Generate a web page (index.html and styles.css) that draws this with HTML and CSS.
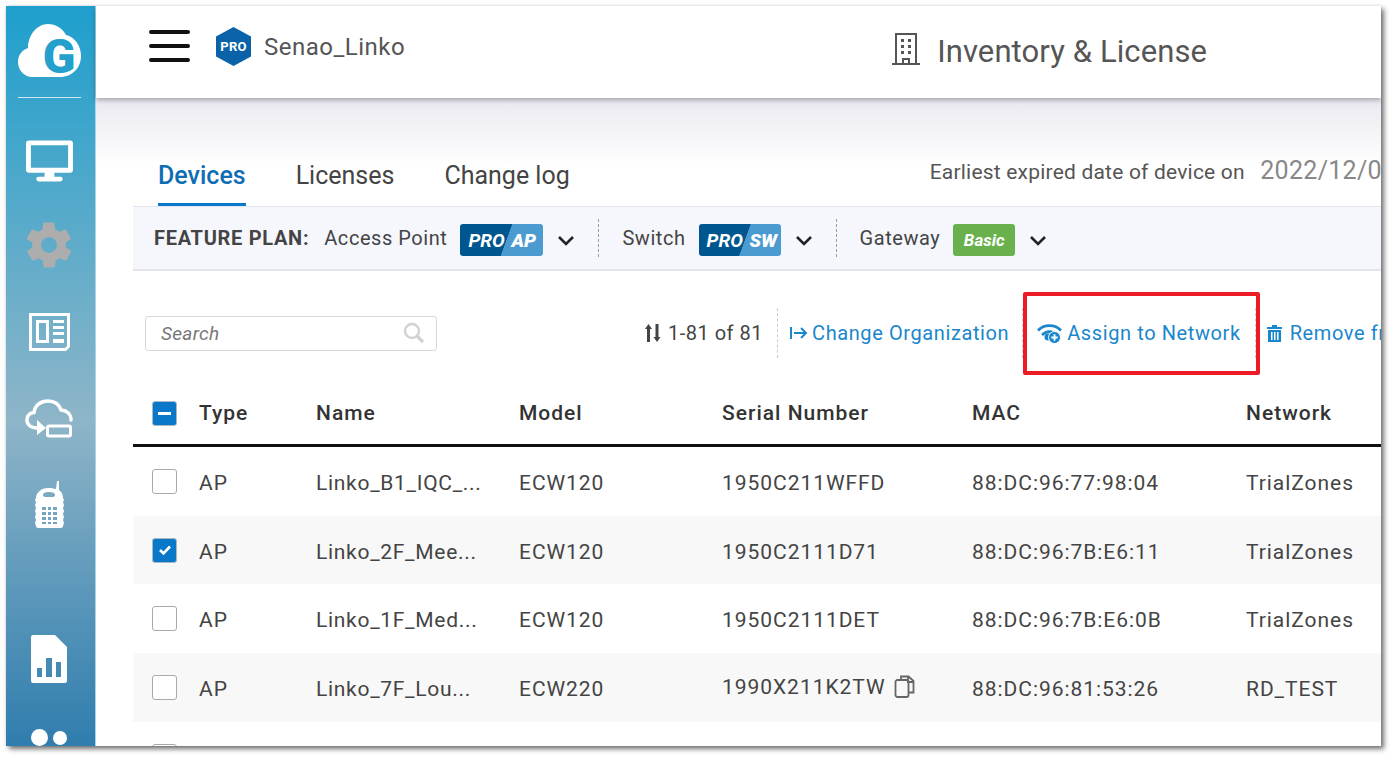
FILE: index.html
```html
<!DOCTYPE html>
<html lang="en">
<head>
  <meta charset="UTF-8" />
  <title>Inventory &amp; License</title>
  <link rel="stylesheet" href="styles.css">
</head>
<body>
  <div class="window">

    <!-- Left navigation -->
    <nav class="sidebar">
      <svg class="logo" viewBox="0 0 63 54">
        <path fill="#fff" d="M14 53C6 53 0 46 0 38c0-7 4-12 10-14C10 11 19 0 30 0c8 0 14 4 18 11 9 2 15 11 15 21 0 12-9 21-21 21z"/>
        <text class="logo-g" x="41" y="49" text-anchor="middle">G</text>
      </svg>
      <div class="logo-line"></div>
      <svg class="nav-icon nav-monitor" viewBox="0 0 48 42">
        <path fill="#fff" d="M3 0h42a3 3 0 0 1 3 3v27a3 3 0 0 1-3 3H29v4h6a2 2 0 0 1 0 5H13a2 2 0 0 1 0-5h6v-4H3a3 3 0 0 1-3-3V3a3 3 0 0 1 3-3zm2 5v23h38V5z"/>
      </svg>
      <svg class="nav-icon nav-gear" viewBox="0 0 24 24">
        <path fill="#adadad" d="M19.4 13c0-.3.1-.6.1-1s0-.7-.1-1l2.1-1.6c.2-.2.2-.4.1-.6l-2-3.5c-.1-.2-.4-.3-.6-.2l-2.5 1c-.5-.4-1.1-.7-1.7-1l-.4-2.7c0-.2-.2-.4-.5-.4h-4c-.2 0-.4.2-.5.4l-.4 2.7c-.6.2-1.1.6-1.7 1l-2.5-1c-.2-.1-.5 0-.6.2l-2 3.5c-.1.2-.1.5.1.6L4.6 11c0 .3-.1.6-.1 1s0 .7.1 1l-2.1 1.6c-.2.2-.2.4-.1.6l2 3.5c.1.2.4.3.6.2l2.5-1c.5.4 1.1.7 1.7 1l.4 2.7c0 .2.2.4.5.4h4c.2 0 .5-.2.5-.4l.4-2.7c.6-.2 1.1-.6 1.7-1l2.5 1c.2.1.5 0 .6-.2l2-3.5c.1-.2.1-.5-.1-.6zM12 15.500a3.500 3.500 0 1 1 0-7 3.500 3.500 0 0 1 0 7z"/>
      </svg>
      <svg class="nav-icon nav-news" viewBox="0 0 41 38">
        <path fill="#fff" fill-rule="evenodd" d="M0 0h41v34l-4 4H0zm3 3v32h33l2-2V3z"/>
        <path fill="#fff" fill-rule="evenodd" d="M7 7h13v23H7zm3 3v17h7V10z"/>
        <path fill="#fff" d="M24 7h11v3H24zM24 13h11v3H24zM24 19h11v3H24zM24 26h11v4H24z"/>
      </svg>
      <svg class="nav-icon nav-cloud" viewBox="0 0 48 39">
        <path fill="none" stroke="#fff" stroke-width="3.400" stroke-linecap="round" d="M13 29c-3 0-6-.5-8-2-2.500-2-3.300-5-3-7 .5-4 3-6 7-6.500C10 6 16 2 23 2c6 0 11 3 13 9 6 .5 10 4 10 10"/>
        <path fill="#fff" d="M12 21l9 8-9 7z"/>
        <rect x="22.500" y="27" width="23" height="10" rx="1.500" fill="none" stroke="#fff" stroke-width="3"/>
      </svg>
      <svg class="nav-icon nav-phone" viewBox="0 0 30 47">
        <path fill="#fff" fill-rule="evenodd" d="M23 0h2v9c3 2 4 5 4 8l1 2-1 2 1 3-1 3 1 3-1 3 1 3-1 3 1 3-1 3c0 1-1 2-2 2H4c-1 0-2-1-2-2l-1-3 1-3-1-3 1-3-1-3 1-3-1-3 1-3-1-2 1-2c0-5 5-10 12-10 3 0 6 .5 8 1zM15 11c-4 0-6 1-6 3s2 2 6 2 6 0 6-2-2-3-6-3zM8 26v3h4v-3zm6 0v3h3v-3zm5 0v3h4v-3zM8 31v3h4v-3zm6 0v3h3v-3zm5 0v3h4v-3zM8 36v3h4v-3zm6 0v3h3v-3zm5 0v3h4v-3zM8 41v2h4v-2zm6 0v2h3v-2zm5 0v2h4v-2z"/>
      </svg>
      <svg class="nav-icon nav-report" viewBox="0 0 36 48">
        <path fill="#fff" fill-rule="evenodd" d="M2 0h22v12h12v34a2 2 0 0 1-2 2H2a2 2 0 0 1-2-2V2a2 2 0 0 1 2-2zM6 33v9h5v-9zm9-10v19h6V23zm10 4v15h5V27z"/>
        <path fill="#fff" d="M24 0l12 12H24z"/>
      </svg>
      <div class="nav-dots"><span class="dot dot-big"></span><span class="dot"></span></div>
    </nav>

    <div class="main">

      <!-- Top bar -->
      <header class="topbar">
        <div class="burger"><span></span><span></span><span></span></div>
        <div class="org-badge">
          <svg viewBox="0 0 35 39"><path fill="#0a62a8" d="M17.500 0L35 9.500v20L17.500 39 0 29.500v-20z"/></svg>
          <span>PRO</span>
        </div>
        <span class="org-name">Senao_Linko</span>
        <svg class="page-icon" viewBox="0 0 28 32">
          <path fill="none" stroke="#555" stroke-width="2" d="M4 31V1h20v30M0 31h28M11 31v-5h6v5"/>
          <path fill="#555" d="M9 6h3v3H9zM16 6h3v3h-3zM9 12h3v3H9zM16 12h3v3h-3zM9 18h3v3H9zM16 18h3v3h-3z"/>
        </svg>
        <h1 class="page-title">Inventory &amp; License</h1>
      </header>

      <div class="content">

        <div class="tabs">
          <a class="tab tab-active">Devices</a>
          <a class="tab">Licenses</a>
          <a class="tab">Change log</a>
          <div class="expiry">Earliest expired date of device on <span class="expiry-date">2022/12/01</span></div>
        </div>

        <!-- Plans per device type -->
        <div class="plan-bar">
          <strong class="plan-title">FEATURE PLAN:</strong>
          <span class="plan-name">Access Point</span>
          <span class="badge badge-pro badge-wide"><i>PRO</i><b>AP</b></span>
          <svg class="chevron" viewBox="0 0 18 11"><path d="M2 2l7 7 7-7" fill="none" stroke="#222" stroke-width="2.600"/></svg>
          <span class="plan-sep"></span>
          <span class="plan-name">Switch</span>
          <span class="badge badge-pro"><i>PRO</i><b>SW</b></span>
          <svg class="chevron" viewBox="0 0 18 11"><path d="M2 2l7 7 7-7" fill="none" stroke="#222" stroke-width="2.600"/></svg>
          <span class="plan-sep"></span>
          <span class="plan-name">Gateway</span>
          <span class="badge badge-basic"><i>Basic</i></span>
          <svg class="chevron" viewBox="0 0 18 11"><path d="M2 2l7 7 7-7" fill="none" stroke="#222" stroke-width="2.600"/></svg>
        </div>

        <div class="toolbar">
          <div class="search">
            <span class="search-text">Search</span>
            <svg viewBox="0 0 22 22"><circle cx="9" cy="9" r="7" fill="none" stroke="#d2d2d2" stroke-width="2.400"/><path d="M14 14l6 6" stroke="#d2d2d2" stroke-width="3.200"/></svg>
          </div>
          <svg class="sort-icon" viewBox="0 0 16 18"><path fill="#444" d="M3.500 0L7 5H5v13H2V5H0zM10.500 0h3v13h2L12 18l-3.500-5h2z"/></svg>
          <span class="count">1-81 of 81</span>
          <span class="tool-sep sep-count"></span>
          <a class="action action-org">
            <svg viewBox="0 0 18 14" class="act-org"><path d="M1 1v12M4 7h12M11 2l5 5-5 5" fill="none" stroke="#1a86cc" stroke-width="2"/></svg>
            Change Organization
          </a>
          <span class="tool-sep sep-org"></span>
          <a class="action action-assign">
            <svg viewBox="0 0 25 21" class="act-wifi">
              <path d="M1 7.500C7 1 18 1 24 7.500" fill="none" stroke="#1a86cc" stroke-width="2.800"/>
              <path d="M5 12C9.500 7.500 15.500 7.500 20 12" fill="none" stroke="#1a86cc" stroke-width="2.800"/>
              <circle cx="11" cy="14" r="3.500" fill="#1a86cc"/>
              <circle cx="17.500" cy="14.500" r="6" fill="#1a86cc" stroke="#fff" stroke-width="1"/>
              <path d="M17.500 11.300v6.400M14.300 14.500h6.400" stroke="#fff" stroke-width="1.800"/>
            </svg>
            Assign to Network
          </a>
          <span class="tool-sep sep-assign"></span>
          <a class="action action-remove">
            <svg viewBox="0 0 15 17" class="act-trash"><path fill="#1a86cc" d="M0 2h5V0h5v2h5v2H0zM1 5h13v12H1zm3 2v8h1.500V7zm3 0v8h1.500V7zm3 0v8h1.500V7z" fill-rule="evenodd"/></svg>
            Remove from Network
          </a>
        </div>

        <div class="table">
          <div class="row row-head">
            <span class="cell-check"><span class="check check-on check-minus"></span></span>
            <span>Type</span><span>Name</span><span>Model</span><span>Serial Number</span><span>MAC</span><span>Network</span>
          </div>
          <div class="row">
            <span class="cell-check"><span class="check"></span></span>
            <span>AP</span><span>Linko_B1_IQC_...</span><span>ECW120</span><span>1950C211WFFD</span><span>88:DC:96:77:98:04</span><span>TrialZones</span>
          </div>
          <div class="row row-alt">
            <span class="cell-check">
              <span class="check check-on"><svg viewBox="0 0 14 12"><path d="M2 6l3.500 3.500L12 2.500" fill="none" stroke="#fff" stroke-width="2.600"/></svg></span>
            </span>
            <span>AP</span><span>Linko_2F_Mee...</span><span>ECW120</span><span>1950C2111D71</span><span>88:DC:96:7B:E6:11</span><span>TrialZones</span>
          </div>
          <div class="row">
            <span class="cell-check"><span class="check"></span></span>
            <span>AP</span><span>Linko_1F_Med...</span><span>ECW120</span><span>1950C2111DET</span><span>88:DC:96:7B:E6:0B</span><span>TrialZones</span>
          </div>
          <div class="row row-alt">
            <span class="cell-check"><span class="check"></span></span>
            <span>AP</span><span>Linko_7F_Lou...</span><span>ECW220</span>
            <span class="serial-copy">1990X211K2TW
              <svg viewBox="0 0 21 23"><path d="M7 5V1.500h7.500L19.500 6v11.500H15M14 1.500V7h5.500" fill="none" stroke="#666" stroke-width="1.800"/><rect x="1.500" y="5" width="13" height="17" rx="2" fill="none" stroke="#666" stroke-width="1.800"/></svg>
            </span>
            <span>88:DC:96:81:53:26</span><span>RD_TEST</span>
          </div>
          <div class="row">
            <span class="cell-check"><span class="check"></span></span>
          </div>
        </div>

        <!-- Red annotation box -->
        <div class="callout"></div>
      </div>
    </div>
  </div>
</body>
</html>
```

FILE: styles.css
```css
/* Base */
html, body {
  margin: 0;
  height: 100%;
  overflow: hidden;
  background: #fff;
}

body {
  font-family: Roboto, "Liberation Sans", sans-serif;
  color: #444;
}

.window {
  width: 1375px;
  height: 740px;
  margin: 6px 0 0 6px;
  display: flex;
  overflow: hidden;
  background: #fff;
  box-shadow: 3px 3px 5px rgba(0, 0, 0, 0.55), 0 0 3px rgba(0, 0, 0, 0.12);
}

/* Sidebar */
.sidebar {
  width: 90px;
  flex: none;
  display: flex;
  flex-direction: column;
  align-items: center;
  box-sizing: border-box;
  padding: 18px 3px 0 0;
  background: linear-gradient(#1e9fcd 0%, #8eb5c8 56%, #2f7dae 100%);
  border-right: 1px solid #a9d4e6;
}

.logo {
  width: 63px;
  height: 54px;
  flex: none;
  overflow: visible;
}

.logo-g {
  font-family: Roboto, sans-serif;
  font-weight: 900;
  font-size: 48px;
  fill: #23a0cc;
}

.logo-line {
  width: 63px;
  height: 1px;
  flex: none;
  margin-top: 19px;
  background: #cfe9f3;
}

.nav-icon {
  display: block;
  flex: none;
}

.nav-monitor { width: 47px; height: 42px; margin-top: 42px; }
.nav-gear { width: 54px; height: 54px; margin-top: 36px; }
.nav-news { width: 41px; height: 38px; margin-top: 41px; }
.nav-cloud { width: 48px; height: 39px; margin-top: 48px; }
.nav-phone { width: 30px; height: 47px; margin-top: 43px; }
.nav-report { width: 36px; height: 48px; margin-top: 107px; }

.nav-dots {
  display: flex;
  flex: none;
  align-items: center;
  gap: 5px;
  margin-top: 46px;
}

.dot {
  width: 14px;
  height: 14px;
  border-radius: 50%;
  background: #fff;
}

.dot-big {
  width: 17px;
  height: 17px;
}

/* Right part */
.main {
  flex: 1;
  min-width: 0;
  display: flex;
  flex-direction: column;
}

.topbar {
  height: 92px;
  flex: none;
  display: flex;
  align-items: center;
  position: relative;
  z-index: 2;
  background: #fff;
  box-shadow: 0 2px 5px rgba(0, 0, 0, 0.3);
}

.burger {
  width: 41px;
  margin-left: 53px;
  margin-top: -12px;
  display: flex;
  flex-direction: column;
  gap: 10px;
}

.burger span {
  height: 4px;
  border-radius: 2px;
  background: #111;
}

.org-badge {
  width: 35px;
  height: 39px;
  margin-left: 26px;
  margin-top: -11px;
  position: relative;
}

.org-badge svg {
  display: block;
  width: 35px;
  height: 39px;
}

.org-badge span {
  position: absolute;
  left: 0;
  right: 0;
  top: 12px;
  text-align: center;
  color: #fff;
  font-size: 13px;
  font-weight: 700;
  letter-spacing: 0.3px;
}

.org-name {
  margin-left: 13px;
  margin-top: -11px;
  font-size: 24px;
  letter-spacing: 0.5px;
  color: #555;
}

.page-icon {
  width: 28px;
  height: 32px;
  margin-left: 487px;
  margin-top: -7px;
}

.page-title {
  margin: -2px 0 0 17px;
  font-size: 31px;
  font-weight: 400;
  letter-spacing: 0.1px;
  color: #555;
}

.content {
  flex: 1;
  min-height: 0;
  position: relative;
  padding-left: 37px;
  background: linear-gradient(#e9e9f0, #fff 67px) no-repeat;
}

/* Tabs */
.tabs {
  height: 108px;
  box-sizing: border-box;
  display: flex;
  align-items: flex-end;
  white-space: nowrap;
  padding-left: 25px;
}

.tab {
  margin-right: 50px;
  padding-bottom: 13px;
  font-size: 25px;
  color: #444;
  border-bottom: 3px solid transparent;
}

.tab-active {
  color: #0e6db3;
  font-weight: 500;
  border-bottom-color: #0a78c9;
}

.expiry {
  margin-left: 310px;
  padding-bottom: 21px;
  font-size: 21px;
  letter-spacing: 0.2px;
  color: #555;
}

.expiry-date {
  margin-left: 10px;
  font-size: 25px;
  letter-spacing: 0.3px;
  color: #888;
}

/* Plan bar */
.plan-bar {
  height: 65px;
  box-sizing: border-box;
  display: flex;
  align-items: center;
  padding: 0 0 0 21px;
  white-space: nowrap;
  font-size: 20px;
  color: #444;
  background: #f6f7fd;
  border-top: 1px solid #e4e6ee;
  border-bottom: 2px solid #e4e5ea;
}

.plan-title {
  font-size: 20px;
  font-weight: 700;
  letter-spacing: 0.7px;
  margin-right: 15px;
}

.plan-name {
  letter-spacing: 0.55px;
}

.badge {
  height: 32px;
  margin-left: 13px;
  margin-top: 4px;
  display: flex;
  align-items: center;
  box-sizing: border-box;
  border-radius: 3px;
  color: #fff;
  font-size: 19px;
  font-weight: 700;
  font-style: italic;
}

.badge-pro {
  width: 82px;
  padding-left: 8px;
  background: linear-gradient(110deg, #00568e 55%, #4b9bd1 55.5%);
}

.badge-wide {
  width: 83px;
}

.badge-pro i {
  width: 43px;
}

.badge-basic {
  width: 62px;
  justify-content: center;
  background: #69b14d;
  font-size: 17px;
}

.chevron {
  width: 18px;
  height: 11px;
  margin-left: 14px;
  margin-top: 4px;
}

.plan-sep {
  height: 38px;
  margin: 0 23px 0 23px;
  border-left: 1px dashed #9c9c9c;
}

/* Toolbar */
.toolbar {
  height: 50px;
  padding-top: 37px;
  display: flex;
  align-items: center;
  white-space: nowrap;
  font-size: 20px;
}

.toolbar > * {
  flex: none;
}

.search {
  width: 292px;
  height: 35px;
  margin-left: 12px;
  box-sizing: border-box;
  display: flex;
  align-items: center;
  justify-content: space-between;
  padding: 0 11px 0 15px;
  border: 1px solid #d8d8d8;
  border-radius: 3px;
  background: #fff;
}

.search-text {
  font-size: 19px;
  font-style: italic;
  letter-spacing: 0.3px;
  color: #777;
}

.search svg {
  width: 22px;
  height: 22px;
}

.sort-icon {
  width: 16px;
  height: 18px;
  margin-left: 208px;
}

.count {
  margin-left: 7px;
  letter-spacing: 0.5px;
  color: #444;
}

.tool-sep {
  height: 50px;
  border-left: 1px dashed #ccc;
}

.sep-count { margin-left: 14px; }
.sep-org { margin-left: 13px; }
.sep-assign { margin-left: 14px; }

.action {
  display: flex;
  align-items: center;
  color: #1a86cc;
  letter-spacing: 0.6px;
}

.action-org { margin-left: 12px; gap: 4px; }
.action-assign { margin-left: 14px; gap: 5px; }
.action-remove { margin-left: 11px; gap: 8px; }

.act-org { width: 18px; height: 14px; }
.act-wifi { width: 25px; height: 21px; }
.act-trash { width: 15px; height: 17px; }

/* Table */
.table {
  font-size: 21px;
  color: #444;
  letter-spacing: 0.95px;
}

.row {
  height: 68.7px;
  display: grid;
  grid-template-columns: 66px 117px 203px 203px 250px 274px 1fr;
  align-items: center;
  white-space: nowrap;
}

.row > span:not(.cell-check) {
  margin-top: 3px;
}

.row > span:nth-child(3) {
  letter-spacing: 0.7px;
}

.row-head {
  height: 89px;
  box-sizing: border-box;
  padding-top: 24px;
  border-bottom: 3px solid #111;
  font-weight: 500;
  color: #333;
}

.row-head > span:nth-child(n) {
  margin-top: 0;
  letter-spacing: 1px;
}

.row-alt {
  background: #f8f8f8;
}

.cell-check {
  padding-left: 19px;
}

.check {
  width: 25px;
  height: 25px;
  box-sizing: border-box;
  display: flex;
  align-items: center;
  justify-content: center;
  border: 1px solid #aaa;
  border-radius: 3px;
  background: #fff;
}

.check svg {
  width: 14px;
  height: 12px;
}

.check-on {
  border-color: #a9b9c4;
  background: #0a78c9;
}

.check-minus::before {
  content: "";
  width: 13px;
  height: 3px;
  background: #fff;
}

.row > span.serial-copy {
  display: flex;
  align-items: center;
  gap: 9px;
  margin-top: -1px;
}

.serial-copy svg {
  width: 21px;
  height: 23px;
}

.callout {
  position: absolute;
  left: 927px;
  top: 194px;
  width: 237px;
  height: 83px;
  box-sizing: border-box;
  border: 4px solid #ed1c24;
  border-radius: 2px;
}
```
